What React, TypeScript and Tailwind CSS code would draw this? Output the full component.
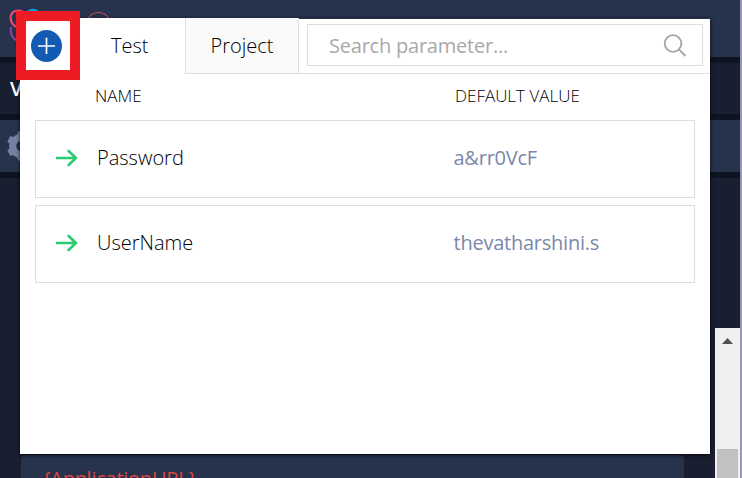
import React from "react";

const parameters = [
  { name: "Password", value: "a&rr0VcF" },
  { name: "UserName", value: "thevatharshini.s" },
];

function ArrowRight() {
  return (
    <svg className="-mt-px block h-[18px] w-[22px]" viewBox="0 0 22 18" fill="none" stroke="#2bcb71" strokeWidth="2.6">
      <path d="M1 9H20M12.6 2L20 9L12.6 16" strokeLinejoin="round" strokeLinecap="round" />
    </svg>
  );
}

function Backdrop() {
  return (
    <div className="flex h-full">
      <div className="relative flex w-[740px] flex-col overflow-hidden bg-[#191e31]">
        <header className="h-[57px] shrink-0 bg-[#27324c]">
          <svg className="block h-[57px] w-[120px]" viewBox="0 0 120 57" fill="none">
            <path d="M19 28C8 25 8 10.5 18 10.5C22 10.5 24 12 26 15" stroke="#ee4a70" strokeWidth="2.2" />
            <path d="M11 27C10 35 13 40 20 41" stroke="#873f99" strokeWidth="2.3" />
            <path d="M27 13C30 9 36 9 39 13" stroke="#0b9fe0" strokeWidth="2.5" />
            <circle cx="98.5" cy="24.5" r="12" stroke="#c14f58" strokeWidth="1.1" />
          </svg>
        </header>
        <div className="h-[63px] shrink-0 border-y-6 border-[#0d1320] pl-[10px] pt-[11px] font-['Open_Sans',sans-serif] text-[20px] font-semibold leading-[30px] text-white">
          V
        </div>
        <div className="flex h-[58px] shrink-0 border-b-6 border-[#0d1320] bg-[#27324c] pl-[7px] pt-[11px]">
          <svg className="h-[30px] w-[30px]" viewBox="0 0 30 30">
            <circle cx="14.5" cy="15" r="8.8" fill="none" stroke="#7681a2" strokeWidth="7" />
            <path
              d="M10 5L11 .5H18L19 5ZM10 25L11 29.5H18L19 25ZM4 13.5L.3 10.8L3.3 5L8 6.8ZM4 16.5L.3 19.2L3.3 25L8 23.2Z"
              fill="#7681a2"
            />
          </svg>
        </div>
        <div className="mt-auto flex h-[150px] shrink-0 justify-between">
          <div className="mt-[127px] ml-[21px] h-[60px] w-[663px] rounded-t-[4px] bg-[#27324c] pl-[22px] pt-[8px] font-['Open_Sans',sans-serif] text-[20px] leading-[32px] tracking-[-0.25px] text-[#df453f]">
            {"{ApplicationURL}"}
          </div>
          <div className="flex w-[25px] flex-col items-center bg-[#f0f0f0]">
            <svg className="mt-[10px] block h-[7px] w-[11px]" viewBox="0 0 11 7">
              <path d="M5.5 0L11 6H0Z" fill="#505050" />
            </svg>
            <div className="mt-auto mr-px h-[29px] w-[21px] bg-[#c1c1c1]" />
          </div>
        </div>
      </div>
      <div className="w-[2px] bg-[#9995b2]" />
    </div>
  );
}

function AddButton() {
  return (
    <button className="absolute left-[-4px] top-[-7px] flex h-[69px] w-[64px] items-center justify-center border-10 border-[#ed1c24] bg-white">
      <svg className="-ml-[3px] block h-[32px] w-[31px]" viewBox="0 0 31 32">
        <ellipse cx="15.5" cy="16" rx="15.5" ry="16" fill="#135bb2" />
        <path d="M7 16H24M15.5 7.8V24" stroke="#fff" strokeWidth="1.7" />
      </svg>
    </button>
  );
}

export default function App() {
  return (
    <div className="relative h-[478px] w-[742px] overflow-hidden">
      <Backdrop />
      <section className="absolute left-[20px] top-[18px] h-[436px] w-[690px] font-['Open_Sans',sans-serif] text-[20px] font-light text-black shadow-[0_1px_4px_rgba(0,0,0,0.8)]">
        <div className="flex h-[56px]">
          <div className="flex w-[165px] bg-white pl-[91px] leading-[56px]">Test</div>
          <div className="w-[114px] border-x border-b border-[#dedede] bg-[#fafafa] pl-[24.5px] leading-[56px]">Project</div>
          <div className="mt-px flex flex-1 border-b border-[#dedede] bg-white pl-[8px] pt-[5px]">
            <div className="flex h-[42px] w-[396px] items-center justify-between border border-[#dedede] pl-[21px] pr-[15px]">
              <span className="pt-[2px] font-normal tracking-[-0.22px] text-[#a8a8a8]">Search parameter...</span>
              <svg className="block h-[24px] w-[24px]" viewBox="0 0 24 24" fill="none" stroke="#a4a4a4" strokeWidth="1.8">
                <circle cx="10" cy="10.5" r="8.3" />
                <path d="M16 16.5L22.5 23" />
              </svg>
            </div>
          </div>
        </div>
        <div className="h-[380px] bg-white px-[15px]">
          <div className="flex h-[46px] pl-[60px] text-[17px] leading-[44px]">
            <span className="w-[360px]">NAME</span>
            <span>DEFAULT VALUE</span>
          </div>
          <div className="flex flex-col gap-[7px]">
            {parameters.map((item) => (
              <div key={item.name} className="flex h-[78px] items-center border border-[#dedede] pb-[2px] pl-[20px]">
                <ArrowRight />
                <span className="ml-[19px] w-[356.5px]">{item.name}</span>
                <span className="font-normal tracking-[-0.24px] text-[#7b88a9]">{item.value}</span>
              </div>
            ))}
          </div>
        </div>
        <AddButton />
      </section>
    </div>
  );
}
